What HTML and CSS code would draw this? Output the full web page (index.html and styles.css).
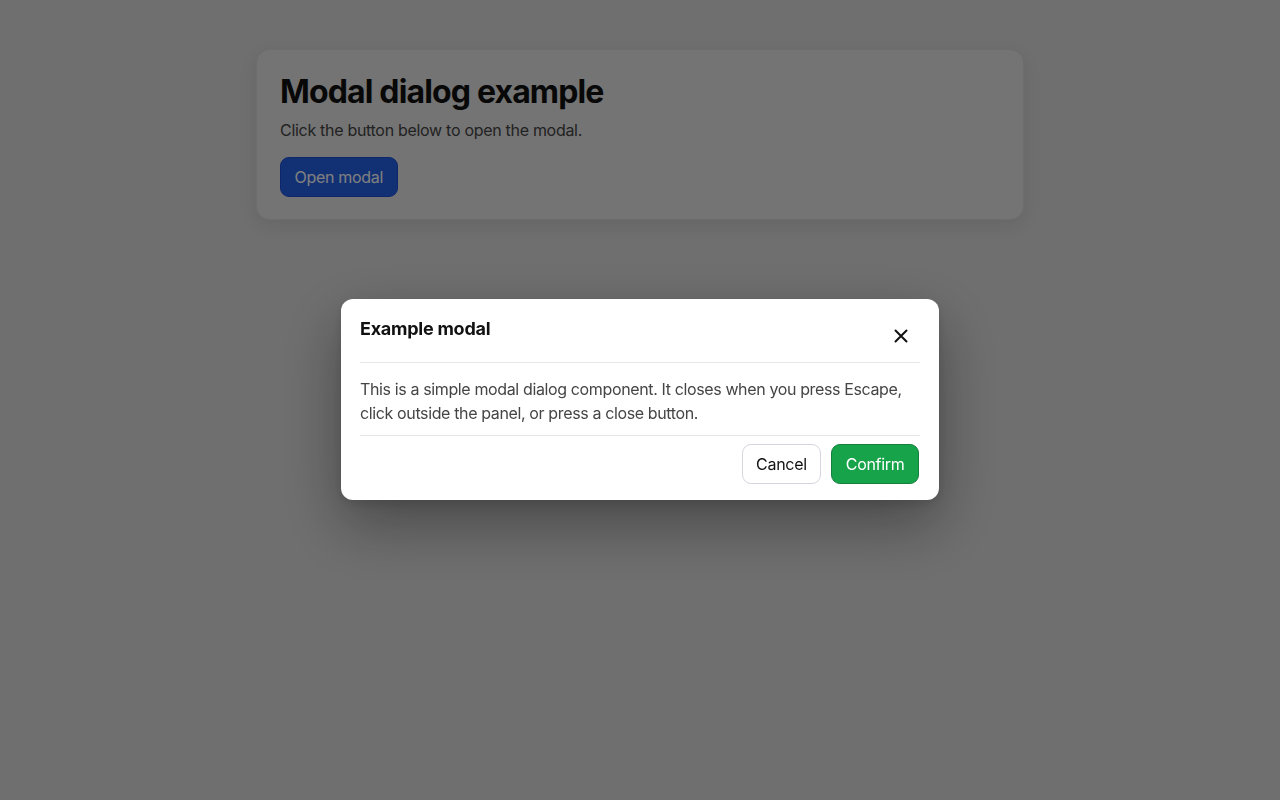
FILE: index.html
```html
<!DOCTYPE html>
<html lang="en">
<head>
<meta charset="utf-8">
<title>Modal dialog example</title>
<link rel="stylesheet" href="styles.css">
</head>
<body>
  <main class="page">
    <section class="card">
      <h1 class="card-title">Modal dialog example</h1>
      <p class="card-text">Click the button below to open the modal.</p>
      <button class="btn btn-primary" type="button">Open modal</button>
    </section>
  </main>

  <div class="overlay">
    <div class="modal" role="dialog" aria-modal="true" aria-labelledby="modal-title">
      <header class="modal-header">
        <h2 class="modal-title" id="modal-title">Example modal</h2>
        <button class="close-btn" type="button" aria-label="Close">
          <svg width="14" height="14" viewBox="0 0 14 14" aria-hidden="true">
            <path d="M1.5 1.5 L12.5 12.5 M12.5 1.5 L1.5 12.5" stroke="#111" stroke-width="2" stroke-linecap="round" fill="none"/>
          </svg>
        </button>
      </header>
      <div class="modal-body">
        <p>This is a simple modal dialog component. It closes when you press Escape, click outside the panel, or press a close button.</p>
      </div>
      <footer class="modal-footer">
        <button class="btn btn-secondary" type="button">Cancel</button>
        <button class="btn btn-success" type="button">Confirm</button>
      </footer>
    </div>
  </div>
</body>
</html>
```

FILE: styles.css
```css
* {
  box-sizing: border-box;
}

html, body {
  margin: 0;
  height: 100%;
}

body {
  background: #dedede;
  font-family: Inter, "Noto Sans", "Liberation Sans", sans-serif;
  color: #111;
}

.page {
  padding: 49px 16px 0;
  display: flex;
  justify-content: center;
}

.card {
  width: 768px;
  background: #e8e8e8;
  border: 1px solid rgba(0, 0, 0, 0.06);
  border-radius: 14px;
  padding: 23px 23px 22px;
  box-shadow: 0 6px 18px rgba(0, 0, 0, 0.08);
}

.card-title {
  margin: 0;
  font-size: 32px;
  line-height: 38px;
  font-weight: 700;
  letter-spacing: -0.85px;
  color: #111;
}

.card-text {
  margin: 7px 0 15px;
  font-size: 16px;
  line-height: 24px;
  letter-spacing: -0.3px;
  color: #454545;
}

.btn {
  height: 40px;
  padding: 0 13.5px;
  border-radius: 9px;
  font-family: inherit;
  font-size: 16px;
  line-height: 22px;
  letter-spacing: -0.3px;
  cursor: pointer;
}

.btn-primary {
  background: #2563eb;
  color: #fff;
  border: 1px solid #1d4ed8;
}

.btn-secondary {
  background: #fff;
  color: #111;
  border: 1px solid #d4d7dd;
}

.btn-success {
  background: #16a34a;
  color: #fff;
  border: 1px solid #15803d;
}

.overlay {
  position: fixed;
  inset: 0;
  background: rgba(0, 0, 0, 0.5);
  display: flex;
  align-items: center;
  justify-content: center;
}

.modal {
  width: 598px;
  margin-top: -2px;
  background: #fff;
  border-radius: 12px;
  padding: 16px 19px 16px;
  box-shadow: 0 24px 60px rgba(0, 0, 0, 0.35), 0 4px 12px rgba(0, 0, 0, 0.12);
}

.modal-header {
  display: flex;
  justify-content: space-between;
  align-items: flex-start;
  padding-bottom: 8px;
  border-bottom: 1px solid #e5e7eb;
}

.modal-title {
  margin: 0;
  font-size: 18px;
  line-height: 28px;
  font-weight: 700;
  letter-spacing: -0.25px;
  color: #111;
}

.close-btn {
  width: 36px;
  height: 36px;
  margin-top: 3px;
  margin-right: 1px;
  display: flex;
  align-items: center;
  justify-content: center;
  background: transparent;
  border: 0;
  border-radius: 8px;
  padding: 0;
  cursor: pointer;
}

.modal-body {
  padding: 14px 0 10px;
}

.modal-body p {
  margin: 0;
  font-size: 16px;
  line-height: 24px;
  letter-spacing: -0.37px;
  color: #454545;
}

.modal-footer {
  display: flex;
  justify-content: flex-end;
  gap: 10px;
  padding-top: 8px;
  padding-right: 1px;
  border-top: 1px solid #e5e7eb;
}
```
